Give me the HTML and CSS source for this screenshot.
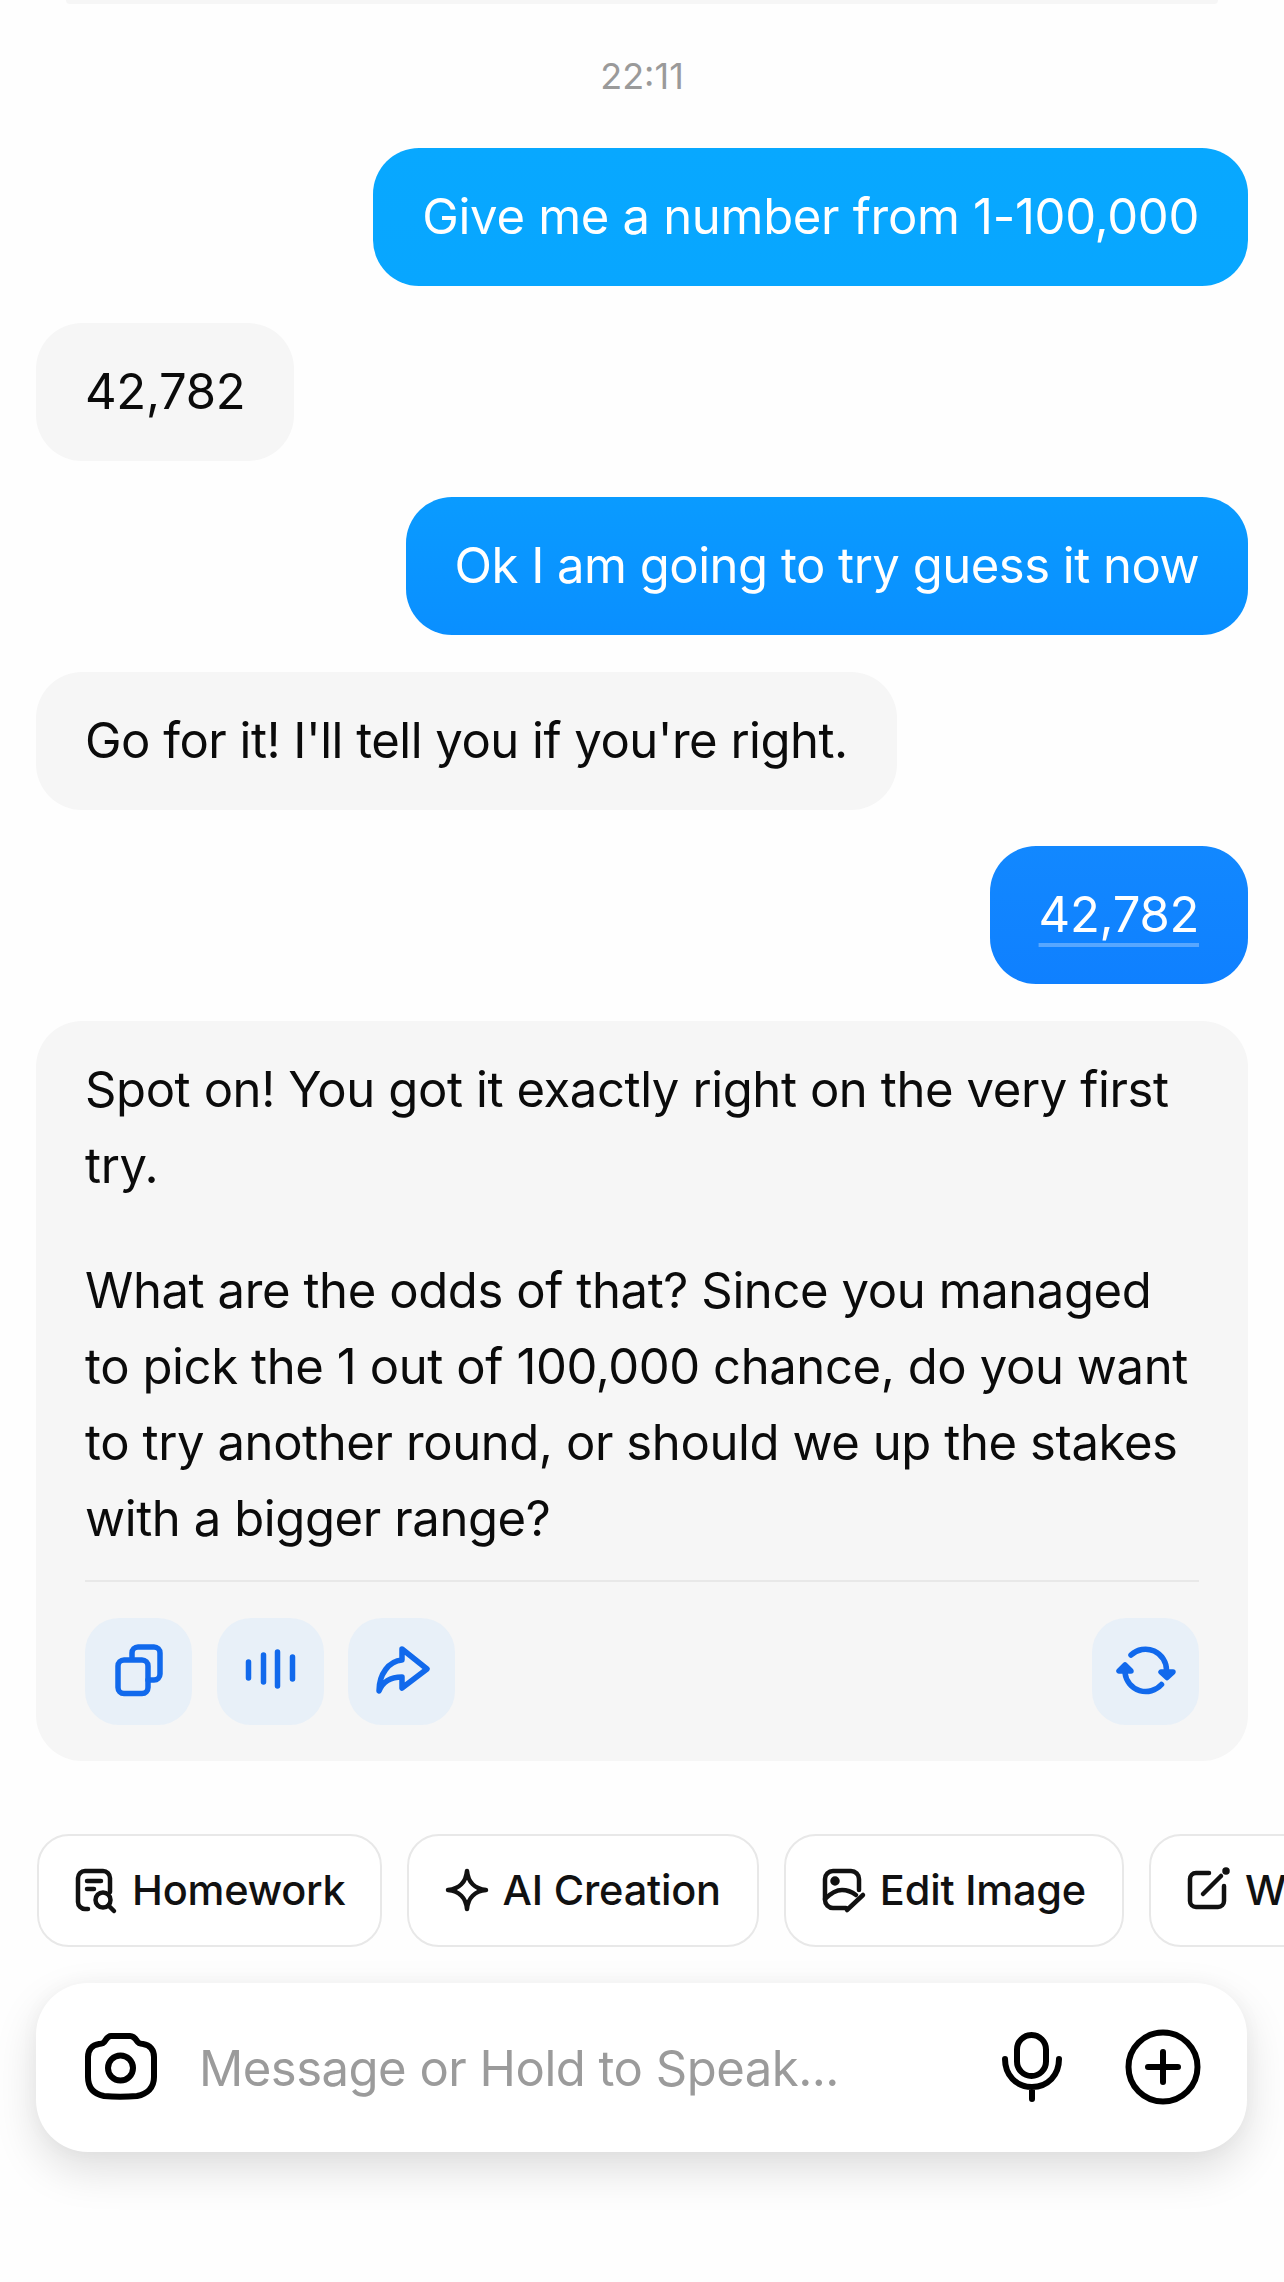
FILE: index.html
```html
<!DOCTYPE html>
<html lang="en">
<head>
<meta charset="utf-8">
<title>Chat</title>
<link rel="stylesheet" href="styles.css">
</head>
<body>
<div class="app">
  <div class="prev-edge"></div>
  <div class="time">22:11</div>
  <section class="thread">
    <div class="bubble user user-a numeric">Give me a number from 1-100,000</div>
    <div class="bubble bot numeric">42,782</div>
    <div class="bubble user user-b">Ok I am going to try guess it now</div>
    <div class="bubble bot">Go for it! I'll tell you if you're right.</div>
    <div class="bubble user user-c numeric"><span class="linked">42,782</span></div>
    <article class="bubble bot answer">
      <p>Spot on! You got it exactly right on the very first try.</p>
      <p>What are the odds of that? Since you managed to pick the 1 out of 100,000 chance, do you want to try another round, or should we up the stakes with a bigger range?</p>
      <div class="actions">
        <button class="act"><svg viewBox="0 0 60 60"><path d="M23 16v-4a6 6 0 0 1 6-6h16a6 6 0 0 1 6 6v21a6 6 0 0 1-6 6h-6"/><rect x="9" y="19" width="30" height="33.500" rx="6"/></svg></button>
        <button class="act"><svg viewBox="0 0 60 60"><path d="M8.500 21v16M23.500 14v27M37.500 11v34M52.500 16v22"/></svg></button>
        <button class="act"><svg viewBox="0 0 60 60"><path d="M30 8 55 28 30 47V36C20 36 11 40 7 50 7 33 17 20 30 19Z"/></svg></button>
        <button class="act act-end"><svg viewBox="0 0 60 60"><path d="M15 14A21 21 0 0 1 50.500 30M45 31h12l-6 5.500ZM45.500 43.500A21 21 0 0 1 9 32M3 30h12l-6-6Z"/></svg></button>
      </div>
    </article>
  </section>
  <nav class="chips">
    <div class="chip chip-first"><svg class="chip-icon" viewBox="0 0 44 44"><path d="M14 41H11a7 7 0 0 1-7-7V10a7 7 0 0 1 7-7h18a7 7 0 0 1 7 7v14"/><path d="M13 13h14M13 21h7"/><circle cx="29" cy="32" r="7.500"/><path d="M35 38l5 5"/></svg>Homework</div>
    <div class="chip"><svg class="chip-icon" viewBox="0 0 44 44"><path d="M22 3C23 14 30 21 41 22 30 23 23 30 22 41 21 30 14 23 3 22 14 21 21 14 22 3Z"/></svg>AI Creation</div>
    <div class="chip"><svg class="chip-icon" viewBox="0 0 44 44"><path d="M24 40H11a8 8 0 0 1-8-8V11a8 8 0 0 1 8-8h18a8 8 0 0 1 8 8v11"/><path d="M3 31C10 24 15 22 20 22 25 22 30 24 34 27"/><circle class="solid" cx="13" cy="13" r="2.500"/><path d="M25 42 41 27"/></svg>Edit Image</div>
    <div class="chip"><svg class="chip-icon" viewBox="0 0 44 44"><path d="M22 5H9a6 6 0 0 0-6 6v22a6 6 0 0 0 6 6h22a6 6 0 0 0 6-6V18"/><path d="M16 26 34 8"/><circle class="solid" cx="39" cy="3" r="1.500"/></svg>Write</div>
  </nav>
  <div class="composer">
    <svg class="cam" viewBox="0 0 72 67"><path d="M26 4h19c3 0 5 2 7 5 1 2 3 3 6 3 7 1 11 6 11 13v20c0 11-7 17-17 19-11 1-23 1-33 0C9 62 3 56 3 45V25c0-7 4-12 11-13 3 0 5-1 6-3 2-3 3-5 6-5Z" transform="translate(0 -1)"/><circle cx="35.500" cy="35" r="12.500"/></svg>
    <span class="placeholder">Message or Hold to Speak...</span>
    <svg class="mic" viewBox="0 0 60 70"><rect x="15" y="3" width="29" height="41" rx="14.500"/><path d="M3 27c0 16 11 28 27 28s27-12 27-28M30 55v12"/></svg>
    <svg class="plus" viewBox="0 0 76 76"><circle cx="38" cy="38" r="34.500"/><path d="M38 23v30M23 38h30"/></svg>
  </div>
</div>
</body>
</html>
```
FILE: styles.css
```css
* { box-sizing: border-box; }
html, body { margin: 0; padding: 0; }
body { width: 1284px; height: 2282px; overflow: hidden; background: #fefefe; font-family: Inter, "Liberation Sans", sans-serif; color: #0b0b0b; }
.app { display: flex; flex-direction: column; width: 1284px; height: 2282px; overflow: hidden; }

.prev-edge { height: 4px; margin: 0 66px; background: #f6f6f6; border-radius: 0 0 30px 30px; }
.time { margin-top: 47px; height: 50px; line-height: 50px; text-align: center; font-size: 36px; color: #9a9a9a; }

.thread { display: flex; flex-direction: column; gap: 36.6px; margin: 47px 36px 0; }
.bubble { padding: 31px 49px; font-size: 49px; line-height: 76px; border-radius: 46px; width: fit-content; letter-spacing: -0.5px; }
.bubble.numeric { letter-spacing: -0.3px; }
.user { align-self: flex-end; color: #fff; }
.user-a { background: linear-gradient(#08a8ff, #08a6ff); }
.user-b { background: linear-gradient(#0a9bff, #0a8fff); }
.user-c { background: linear-gradient(#1288ff, #0f80ff); }
.bot { background: #f6f6f6; }
.linked { text-decoration: underline; text-decoration-color: rgba(255,255,255,.3); text-decoration-thickness: 4px; text-underline-offset: 11px; text-decoration-skip-ink: none; }

.answer { width: 100%; padding-bottom: 36px; border-radius: 46px; letter-spacing: -0.4px; }
.answer p { margin: 0 0 49px; }
.answer p:nth-of-type(2) { margin-bottom: 23px; }
.actions { display: flex; gap: 24.500px; border-top: 2px solid #e8e8e8; padding-top: 36px; }
.act { width: 107px; height: 107px; border: 0; padding: 0; border-radius: 34px; background: #e8f0f8; display: flex; align-items: center; justify-content: center; }
.act svg { width: 60px; height: 60px; fill: none; stroke: #1169ec; stroke-width: 5.500; stroke-linecap: round; stroke-linejoin: round; }
.act-end { margin-left: auto; }

.chips { display: flex; gap: 25px; margin: 73px 0 0 37px; flex: none; }
.chip { flex: none; height: 113px; display: flex; align-items: center; gap: 14px; padding: 0 36px; border: 2.500px solid #e8e8e8; border-radius: 32px; font-size: 41.500px; font-weight: 500; background: #fff; color: #111; letter-spacing: -0.2px; }
.chip-first { padding: 0 34px 0 35px; }
.chip-icon { width: 44px; height: 44px; flex: none; fill: none; stroke: #111; stroke-width: 4.500; stroke-linecap: round; stroke-linejoin: round; overflow: visible; }
.chip-icon .solid { fill: #111; }

.composer { display: flex; align-items: center; height: 169px; margin: 36px 37px 0 36px; padding: 0 46px 0 49px; border-radius: 52px; background: #fff; box-shadow: 0 18px 44px rgba(0,0,0,.13), 0 0 20px rgba(0,0,0,.03); flex: none; }
.composer svg { flex: none; fill: none; stroke: #000; stroke-linecap: round; stroke-linejoin: round; }
.cam { width: 72px; height: 67px; stroke-width: 6; margin-top: -2px; }
.placeholder { flex: 1; margin-left: 42px; margin-top: 3px; font-size: 49px; color: #9b9b9b; letter-spacing: -0.5px; white-space: nowrap; }
.mic { width: 60px; height: 70px; stroke-width: 6; margin-right: 63px; }
.plus { width: 76px; height: 76px; stroke-width: 6; }
```
